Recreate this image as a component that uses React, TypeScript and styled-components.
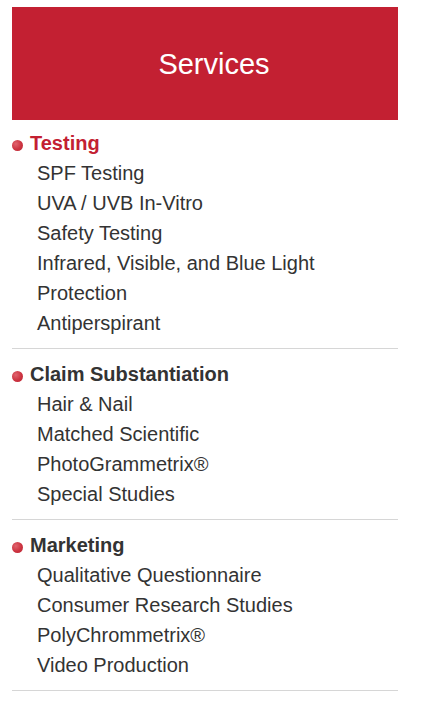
import React from "react";
import styled, { createGlobalStyle } from "styled-components";

const GlobalStyle = createGlobalStyle`
  body {
    margin: 0;
    background: #fff;
    font-family: "Liberation Sans", Arial, sans-serif;
  }
`;

const Sidebar = styled.aside`
  width: 386px;
  margin: 7px 0 0 12px;
`;

const Header = styled.div`
  height: 113px;
  background: #c32032;
  display: flex;
  align-items: center;
  justify-content: center;
  color: #fff;
  font-size: 29px;
  padding: 1px 0 0 18px;
  box-sizing: border-box;
`;

const Groups = styled.ul`
  list-style: none;
  margin: 0;
  padding: 8px 0 0;
`;

const Group = styled.li`
  padding-bottom: 10px;
  margin-bottom: 10px;
  border-bottom: 1px solid #d6d6d6;
`;

const GroupTitle = styled.div<{ $active?: boolean }>`
  display: flex;
  align-items: center;
  height: 30px;
  font-size: 20px;
  font-weight: bold;
  color: ${(p) => (p.$active ? "#c32032" : "#333333")};
`;

const Bullet = styled.span`
  width: 11px;
  height: 11px;
  border-radius: 50%;
  margin: 4px 7px 0 0;
  background: radial-gradient(circle at 35% 35%, #e0646e 0%, #cc3340 55%, #b82634 100%);
  flex-shrink: 0;
`;

const Items = styled.ul`
  list-style: none;
  margin: 0;
  padding: 0 0 0 25px;
`;

const Item = styled.li`
  height: 30px;
  line-height: 30px;
  font-size: 20px;
  color: #333333;
`;

const groups = [
  {
    title: "Testing",
    active: true,
    items: [
      "SPF Testing",
      "UVA / UVB In-Vitro",
      "Safety Testing",
      "Infrared, Visible, and Blue Light",
      "Protection",
      "Antiperspirant",
    ],
  },
  {
    title: "Claim Substantiation",
    items: ["Hair & Nail", "Matched Scientific", "PhotoGrammetrix®", "Special Studies"],
  },
  {
    title: "Marketing",
    items: [
      "Qualitative Questionnaire",
      "Consumer Research Studies",
      "PolyChrommetrix®",
      "Video Production",
    ],
  },
];

export default function App() {
  return (
    <>
      <GlobalStyle />
      <Sidebar>
        <Header>Services</Header>
        <Groups>
          {groups.map((g) => (
            <Group key={g.title}>
              <GroupTitle $active={g.active}>
                <Bullet />
                {g.title}
              </GroupTitle>
              <Items>
                {g.items.map((i) => (
                  <Item key={i}>{i}</Item>
                ))}
              </Items>
            </Group>
          ))}
        </Groups>
      </Sidebar>
    </>
  );
}
